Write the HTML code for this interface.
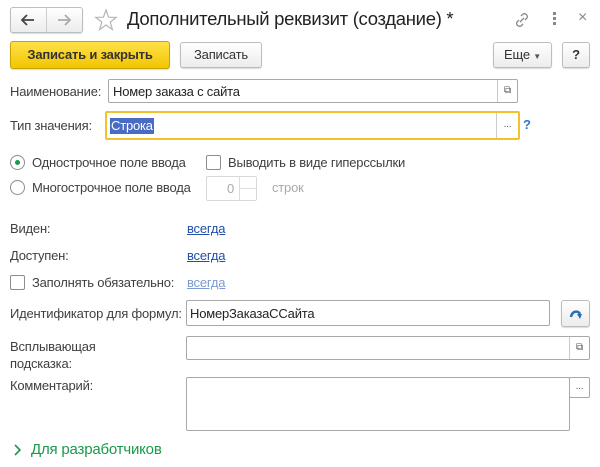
<!DOCTYPE html>
<html><head><meta charset="utf-8"><style>
*{box-sizing:border-box;margin:0;padding:0}
body{width:600px;height:467px;background:#fff;font-family:"Liberation Sans",Arial,sans-serif;font-size:13px;letter-spacing:-0.2px;color:#404040;position:relative;overflow:hidden}
.a{position:absolute;white-space:nowrap}
.btn{position:absolute;border:1px solid #bdbdbd;border-radius:3px;background:linear-gradient(#fff,#ececec);box-shadow:0 1px 1px rgba(0,0,0,.15);text-align:center;color:#333}
.inp{position:absolute;border:1px solid #a9a9a9;border-radius:2px;background:#fff}
.ib{position:absolute;top:0;right:0;bottom:0;width:20px;border-left:1px solid #c8c8c8;text-align:center;color:#555;font-size:10px}
.lnk{color:#1f4fa8;text-decoration:underline}
.cb{position:absolute;width:15px;height:15px;border:1px solid #8d8d8d;border-radius:2px;background:#fff}
.rd{position:absolute;width:15px;height:15px;border:1px solid #8d8d8d;border-radius:50%;background:#fff}
</style></head><body>
<div class="btn" style="left:10px;top:7px;width:73px;height:26px;"></div>
<div class="a" style="left:46px;top:8px;width:1px;height:24px;background:#ccc"></div>
<svg class="a" style="left:19px;top:13px" width="16" height="14"><path d="M15 7H3M8 2L3 7l5 5" stroke="#444" stroke-width="1.8" fill="none"/></svg>
<svg class="a" style="left:57px;top:13px" width="16" height="14"><path d="M1 7h12M8 2l5 5-5 5" stroke="#aaa" stroke-width="1.8" fill="none"/></svg>
<svg class="a" style="left:94px;top:8px" width="24" height="24"><path d="M12 2l2.6 7.2 7.6.2-6 4.7 2.2 7.4L12 17l-6.4 4.5 2.2-7.4-6-4.7 7.6-.2z" fill="none" stroke="#b5b5b5" stroke-width="1.2"/></svg>
<div class="a" style="left:127px;top:8px;font-size:18.5px;letter-spacing:-0.3px;color:#222">Дополнительный реквизит (создание) *</div>
<svg class="a" style="left:513px;top:11px" width="18" height="18"><path d="M7 11l4-4M8 5l2-2a3 3 0 014 4l-2 2M10 13l-2 2a3 3 0 01-4-4l2-2" stroke="#888" stroke-width="1.3" fill="none"/></svg>
<div class="a" style="left:553px;top:12px;width:3px;height:3px;background:#888;box-shadow:0 5px #888,0 10px #888"></div>
<div class="a" style="left:578px;top:9px;font-size:16px;color:#888">×</div>

<div class="btn" style="left:10px;top:41px;width:160px;height:28px;background:linear-gradient(#ffe14a,#f2c500);border-color:#c9a400;font-weight:bold;line-height:26px;color:#333">Записать и закрыть</div>
<div class="btn" style="left:180px;top:42px;width:82px;height:26px;line-height:24px">Записать</div>
<div class="btn" style="left:493px;top:42px;width:59px;height:26px;line-height:24px">Еще <span style="font-size:8px;color:#555">▼</span></div>
<div class="btn" style="left:562px;top:42px;width:28px;height:26px;line-height:24px;font-weight:bold">?</div>

<div class="a" style="left:10px;top:84px">Наименование:</div>
<div class="inp" style="left:108px;top:79px;width:410px;height:24px"><div class="a" style="left:4px;top:4px;color:#222">Номер заказа с сайта</div><div class="ib" style="line-height:22px">⧉</div></div>

<div class="a" style="left:10px;top:118px">Тип значения:</div>
<div class="inp" style="left:105px;top:111px;width:415px;height:29px;border:2px solid #f2c12e"><div class="a" style="left:3px;top:5px;background:#4a6bc4;color:#fff;padding:0 1px;line-height:16px">Строка</div><div class="ib" style="line-height:24px;width:22px;border-left:1px solid #ccc">...</div></div>
<div class="a" style="left:523px;top:117px;color:#2a7cc7;font-weight:bold">?</div>

<div class="rd" style="left:10px;top:155px"><div class="a" style="left:4px;top:4px;width:5px;height:5px;border-radius:50%;background:#1a9a4a"></div></div>
<div class="a" style="left:32px;top:155px">Однострочное поле ввода</div>
<div class="cb" style="left:206px;top:155px"></div>
<div class="a" style="left:228px;top:155px">Выводить в виде гиперссылки</div>
<div class="rd" style="left:10px;top:180px"></div>
<div class="a" style="left:32px;top:180px">Многострочное поле ввода</div>
<div class="a" style="left:206px;top:176px;width:51px;height:25px;border:1px solid #d8d8d8;border-radius:2px"><div class="a" style="left:20px;top:4px;color:#aaa">0</div><div class="a" style="left:32px;top:0;bottom:0;border-left:1px solid #ddd;width:18px"></div><div class="a" style="left:32px;top:11px;width:18px;border-top:1px solid #ddd"></div></div>
<div class="a" style="left:272px;top:180px;color:#aaa">строк</div>

<div class="a" style="left:10px;top:221px">Виден:</div><div class="a lnk" style="left:187px;top:221px">всегда</div>
<div class="a" style="left:10px;top:248px">Доступен:</div><div class="a lnk" style="left:187px;top:248px">всегда</div>
<div class="cb" style="left:10px;top:275px"></div>
<div class="a" style="left:32px;top:275px">Заполнять обязательно:</div><div class="a lnk" style="left:187px;top:275px;color:#7d9bd0">всегда</div>

<div class="a" style="left:10px;top:306px">Идентификатор для формул:</div>
<div class="inp" style="left:186px;top:300px;width:364px;height:26px"><div class="a" style="left:3px;top:5px;color:#222">НомерЗаказаССайта</div></div>
<div class="btn" style="left:561px;top:300px;width:29px;height:27px"><svg class="a" style="left:7px;top:6px" width="14" height="14"><path d="M2 10C3 4 9 3 11 7" stroke="#2a6fb5" stroke-width="2.5" fill="none"/><path d="M8 7h5l-2 5z" fill="#2a6fb5"/></svg></div>

<div class="a" style="left:10px;top:338px;line-height:17px">Всплывающая<br>подсказка:</div>
<div class="inp" style="left:186px;top:336px;width:404px;height:24px"><div class="ib" style="line-height:22px">⧉</div></div>

<div class="a" style="left:10px;top:378px">Комментарий:</div>
<div class="inp" style="left:186px;top:377px;width:384px;height:54px"></div>
<div class="inp" style="left:569px;top:377px;width:21px;height:21px;text-align:center;font-size:10px;line-height:18px;color:#555">...</div>

<svg class="a" style="left:13px;top:443px" width="10" height="14"><path d="M2 2l5 5-5 5" stroke="#1a9a4a" stroke-width="1.6" fill="none"/></svg>
<div class="a" style="left:31px;top:441px;font-size:15px;color:#1a9a4a">Для разработчиков</div>
</body></html>
